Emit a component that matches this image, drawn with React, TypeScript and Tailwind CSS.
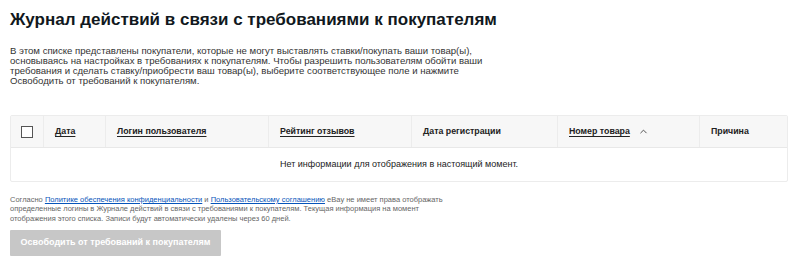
import { ChevronUp } from "lucide-react";

const columns = [
  { label: "Дата", w: "w-[62px]", link: true },
  { label: "Логин пользователя", w: "w-[163px]", link: true },
  { label: "Рейтинг отзывов", w: "w-[143px]", link: true },
  { label: "Дата регистрации", w: "w-[146px]", link: false },
  { label: "Номер товара", w: "w-[142px]", link: true, sort: true },
  { label: "Причина", w: "flex-1", link: false },
];

export default function App() {
  return (
    <div className="w-[800px] h-[263px] bg-white px-[10px] pt-[9px] font-['Liberation_Sans',Arial,sans-serif] text-[#111820] overflow-hidden">
      <h1 className="text-[17px] leading-[22px] font-bold">
        Журнал действий в связи с требованиями к покупателям
      </h1>

      <p className="mt-[15px] w-[480px] text-[9.6px] leading-[10px] text-[#333]">
        В этом списке представлены покупатели, которые не могут выставлять ставки/покупать ваши товар(ы),
        основываясь на настройках в требованиях к покупателям. Чтобы разрешить пользователям обойти ваши
        требования и сделать ставку/приобрести ваш товар(ы), выберите соответствующее поле и нажмите
        Освободить от требований к покупателям.
      </p>

      <div className="mt-[29px] w-[778px] border border-[#ececec] rounded-[2px]">
        <div className="flex h-[32px] bg-[#f7f7f7] border-b border-[#e8e8e8]">
          <div className="w-[33px] flex items-center justify-center border-r border-[#ececec]">
            <span className="w-[12px] h-[12px] border border-[#555] bg-white" />
          </div>
          {columns.map((c, i) => (
            <div
              key={i}
              className={`${c.w} flex items-center pl-[11px] text-[8.8px] font-bold text-[#222] ${
                i < columns.length - 1 ? "border-r border-[#ececec]" : ""
              }`}
            >
              <span className={c.link ? "underline underline-offset-[2px]" : ""}>{c.label}</span>
              {c.sort && <ChevronUp className="ml-[8px] w-[11px] h-[11px] text-[#444]" strokeWidth={2} />}
            </div>
          ))}
        </div>
        <div className="h-[33px] flex items-center justify-center text-[9px] text-[#222]">
          Нет информации для отображения в настоящий момент.
        </div>
      </div>

      <p className="mt-[13px] w-[440px] text-[7.5px] leading-[9.4px] text-[#666]">
        Согласно{" "}
        <a className="text-[#0654ba] underline">Политике обеспечения конфиденциальности</a> и{" "}
        <a className="text-[#0654ba] underline">Пользовательскому соглашению</a> eBay не имеет права отображать
        определенные логины в Журнале действий в связи с требованиями к покупателям. Текущая информация на момент
        отображения этого списка. Записи будут автоматически удалены через 60 дней.
      </p>

      <button className="mt-[7px] w-[211px] h-[26px] bg-[#c7c7c7] text-white text-[9px] font-bold rounded-[1px]">
        Освободить от требований к покупателям
      </button>
    </div>
  );
}
